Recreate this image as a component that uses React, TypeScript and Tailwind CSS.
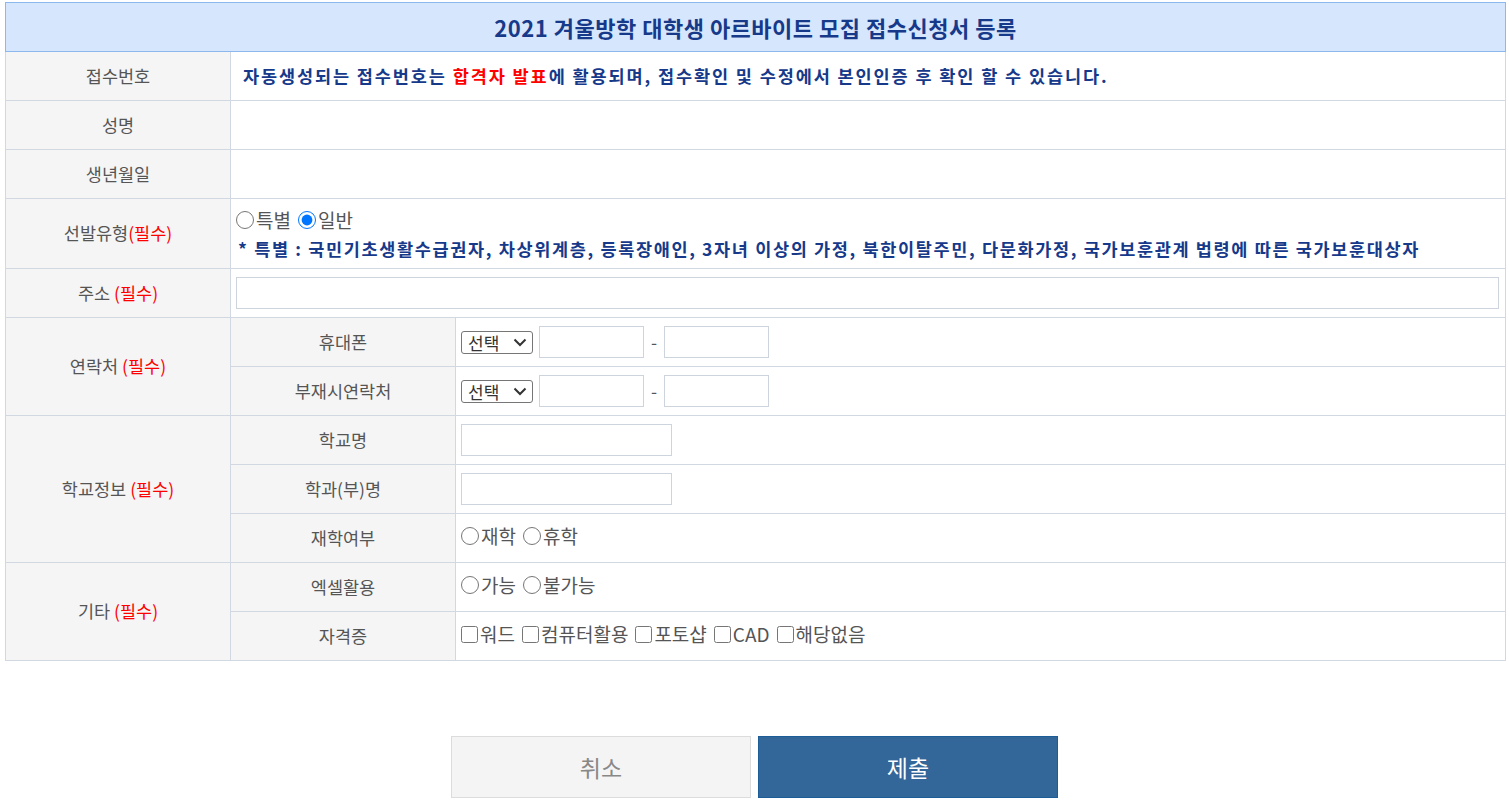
import React from "react";

const F = "font-['Noto_Sans_CJK_KR','Noto_Sans',sans-serif]";

function Req() {
  return <span className="text-[#ff0000]">(필수)</span>;
}

function Radio({ label, checked, name }: { label: string; checked?: boolean; name: string }) {
  return (
    <label className="inline-flex items-center mr-[7px]">
      <input type="radio" name={name} defaultChecked={checked} className="w-[18px] h-[18px] m-0 mr-[2px]" />
      <span>{label}</span>
    </label>
  );
}

function Check({ label }: { label: string }) {
  return (
    <label className="inline-flex items-center mr-[7px]">
      <input type="checkbox" className="w-[17px] h-[17px] m-0 mr-[2px]" />
      <span>{label}</span>
    </label>
  );
}

function Select() {
  return (
    <div className="inline-flex items-center justify-between w-[72px] h-[23px] border border-[#767676] rounded-[3px] pl-[6px] pr-[5px] text-[17px] text-[#333] bg-white">
      <span className="leading-none">선택</span>
      <svg width="14" height="9" viewBox="0 0 14 9">
        <path d="M1.5 1.5 L7 7 L12.5 1.5" fill="none" stroke="#333" strokeWidth="2" />
      </svg>
    </div>
  );
}

const label = "bg-[#f5f5f5] border border-[#d1d8e2] text-center text-[17.5px] text-[#555] font-normal";
const cell = "bg-white border border-[#d1d8e2] text-[17.5px] text-[#555] pl-[5px] pr-[6px]";
const opt = "flex items-center -mt-[4px] text-[19px]";
const inputCls = "block h-[32px] border border-[#cdd4de] bg-white";

export default function App() {
  return (
    <div className={`${F} bg-white min-h-[806px] pt-[2px]`}>
      <table className="w-[1500px] ml-[5px] border-collapse table-fixed">
        <colgroup>
          <col className="w-[225px]" />
          <col className="w-[225px]" />
          <col className="w-[1050px]" />
        </colgroup>
        <tbody>
          <tr className="h-[49px]">
            <th colSpan={3} className="bg-[#d6e6fd] border border-[#8db8ee] text-[22px] font-bold text-[#16398a] text-center tracking-[0.5px]">
              2021 겨울방학 대학생 아르바이트 모집 접수신청서 등록
            </th>
          </tr>
          <tr className="h-[49px]">
            <th className={label}>접수번호</th>
            <td colSpan={2} className={`${cell} pl-[12px]`}>
              <span className="font-bold text-[17.5px] text-[#16398a] tracking-[1.9px]">
                자동생성되는 접수번호는 <span className="text-[#ff0000]">합격자 발표</span>에 활용되며, 접수확인 및 수정에서 본인인증 후 확인 할 수 있습니다.
              </span>
            </td>
          </tr>
          <tr className="h-[49px]">
            <th className={label}>성명</th>
            <td colSpan={2} className={`${cell} pl-0`}>
              <div className="relative z-10 w-[3px] h-[36px] bg-white -ml-[2px] mt-[2px]" />
            </td>
          </tr>
          <tr className="h-[49px]">
            <th className={label}>생년월일</th>
            <td colSpan={2} className={`${cell} pl-0`}>
              <div className="relative z-10 w-[5px] h-[33px] bg-white -ml-[4px]" />
            </td>
          </tr>
          <tr className="h-[70px]">
            <th className={label}>
              선발유형<Req />
            </th>
            <td colSpan={2} className={`${cell} pt-[3px]`}>
              <div className="flex flex-col">
                <div className="flex items-center h-[28px] text-[19px]">
                  <Radio name="t" label="특별" />
                  <Radio name="t" label="일반" checked />
                </div>
                <div className="font-bold text-[17.5px] text-[#16398a] pl-[2px] leading-[30px] tracking-[1.65px] whitespace-nowrap">
                  * 특별 : 국민기초생활수급권자, 차상위계층, 등록장애인, 3자녀 이상의 가정, 북한이탈주민, 다문화가정, 국가보훈관계 법령에 따른 국가보훈대상자
                </div>
              </div>
            </td>
          </tr>
          <tr className="h-[49px]">
            <th className={label}>
              주소 <Req />
            </th>
            <td colSpan={2} className={cell}>
              <input type="text" className={`${inputCls} w-full`} />
            </td>
          </tr>
          <tr className="h-[49px]">
            <th rowSpan={2} className={label}>
              연락처 <Req />
            </th>
            <th className={label}>휴대폰</th>
            <td className={cell}>
              <div className="flex items-center">
                <Select />
                <input type="text" className={`${inputCls} w-[105px] ml-[6px]`} />
                <span className="mx-[7px] text-[#555]">-</span>
                <input type="text" className={`${inputCls} w-[105px]`} />
              </div>
            </td>
          </tr>
          <tr className="h-[49px]">
            <th className={label}>부재시연락처</th>
            <td className={cell}>
              <div className="flex items-center">
                <Select />
                <input type="text" className={`${inputCls} w-[105px] ml-[6px]`} />
                <span className="mx-[7px] text-[#555]">-</span>
                <input type="text" className={`${inputCls} w-[105px]`} />
              </div>
            </td>
          </tr>
          <tr className="h-[49px]">
            <th rowSpan={3} className={label}>
              학교정보 <Req />
            </th>
            <th className={label}>학교명</th>
            <td className={cell}>
              <input type="text" className={`${inputCls} w-[211px]`} />
            </td>
          </tr>
          <tr className="h-[49px]">
            <th className={label}>학과(부)명</th>
            <td className={cell}>
              <input type="text" className={`${inputCls} w-[211px]`} />
            </td>
          </tr>
          <tr className="h-[49px]">
            <th className={label}>재학여부</th>
            <td className={cell}>
              <div className={opt}>
                <Radio name="s" label="재학" />
                <Radio name="s" label="휴학" />
              </div>
            </td>
          </tr>
          <tr className="h-[49px]">
            <th rowSpan={2} className={label}>
              기타 <Req />
            </th>
            <th className={label}>엑셀활용</th>
            <td className={cell}>
              <div className={opt}>
                <Radio name="e" label="가능" />
                <Radio name="e" label="불가능" />
              </div>
            </td>
          </tr>
          <tr className="h-[49px]">
            <th className={label}>자격증</th>
            <td className={cell}>
              <div className={opt}>
                <Check label="워드" />
                <Check label="컴퓨터활용" />
                <Check label="포토샵" />
                <Check label="CAD" />
                <Check label="해당없음" />
              </div>
            </td>
          </tr>
        </tbody>
      </table>
      <div className="flex justify-center gap-[7px] mt-[75px]">
        <button className="w-[300px] h-[62px] bg-[#f4f4f4] border border-[#dcdcdc] text-[23px] text-[#888]">취소</button>
        <button className="w-[300px] h-[62px] bg-[#336699] border border-[#1d5d97] text-[23px] text-white">제출</button>
      </div>
    </div>
  );
}
